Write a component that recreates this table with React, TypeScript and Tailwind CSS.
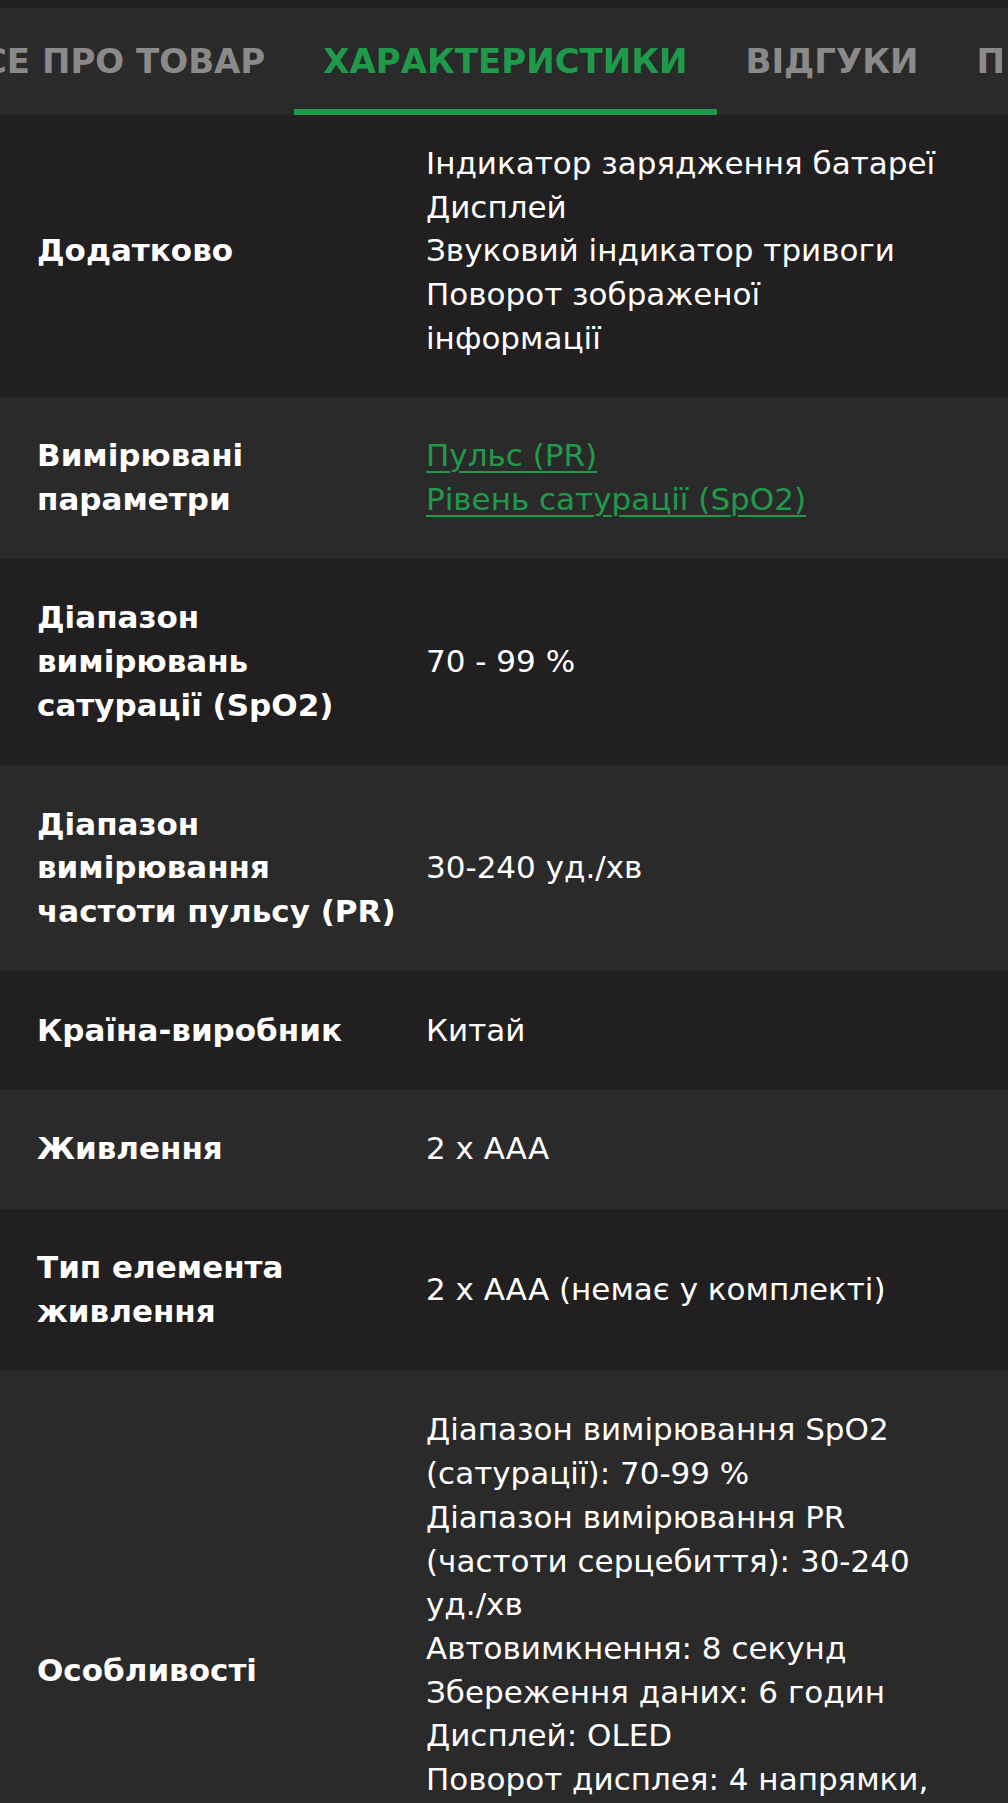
import React, { useLayoutEffect, useRef } from "react";

type Row = {
  label: string[];
  value: string[];
  link?: boolean;
  first?: boolean;
};

const rows: Row[] = [
  {
    label: ["Додатково"],
    value: [
      "Індикатор зарядження батареї",
      "Дисплей",
      "Звуковий індикатор тривоги",
      "Поворот зображеної",
      "інформації",
    ],
    first: true,
  },
  {
    label: ["Вимірювані", "параметри"],
    value: ["Пульс (PR)", "Рівень сатурації (SpO2)"],
    link: true,
  },
  {
    label: ["Діапазон", "вимірювань", "сатурації (SpO2)"],
    value: ["70 - 99 %"],
  },
  {
    label: ["Діапазон", "вимірювання", "частоти пульсу (PR)"],
    value: ["30-240 уд./хв"],
  },
  { label: ["Країна-виробник"], value: ["Китай"] },
  { label: ["Живлення"], value: ["2 x AAA"] },
  { label: ["Тип елемента", "живлення"], value: ["2 x AAA (немає у комплекті)"] },
  {
    label: ["Особливості"],
    value: [
      "Діапазон вимірювання SpO2",
      "(сатурації): 70-99 %",
      "Діапазон вимірювання PR",
      "(частоти серцебиття): 30-240",
      "уд./хв",
      "Автовимкнення: 8 секунд",
      "Збереження даних: 6 годин",
      "Дисплей: OLED",
      "Поворот дисплея: 4 напрямки,",
      "6 режимів відображення",
      "Індикатор низького заряду",
      "батареї",
    ],
  },
];

const tabs = ["Все про товар", "Характеристики", "Відгуки", "Питання"];

function Tabs() {
  const scroller = useRef<HTMLDivElement>(null);
  const active = useRef<HTMLButtonElement>(null);
  useLayoutEffect(() => {
    if (scroller.current && active.current) {
      scroller.current.scrollLeft = active.current.offsetLeft - 294;
    }
  }, []);
  return (
    <div className="bg-[#1f1e1e] pt-[8px]">
      <div
        ref={scroller}
        className="bg-[#2b2a2a] h-[107px] overflow-x-auto overflow-y-hidden [scrollbar-width:none]"
      >
        <div className="relative flex h-full w-max">
          {tabs.map((t, i) => {
            const isActive = i === 1;
            return (
              <button
                key={t}
                ref={isActive ? active : undefined}
                className={
                  "relative flex h-full items-center whitespace-nowrap px-[29px] pb-[1px] text-[34px] font-bold uppercase leading-none " +
                  (isActive ? "text-[#1f9a4a]" : "text-[#8a8a8a]")
                }
              >
                {t}
                {isActive && (
                  <span className="absolute bottom-0 left-0 right-0 h-[6px] bg-[#1f9a4a]" />
                )}
              </button>
            );
          })}
        </div>
      </div>
    </div>
  );
}

export default function App() {
  return (
    <div
      className="min-h-[1803px] bg-[#211f1f] text-white"
      style={{ fontFamily: '"DejaVu Sans", sans-serif' }}
    >
      <Tabs />
      <div>
        {rows.map((r, i) => (
          <div
            key={i}
            className={
              "grid grid-cols-[370px_530px] items-center gap-x-[19px] px-[37px] " +
              (i % 2 === 0 ? "bg-[#211f1f] " : "bg-[#2b2a2a] ") +
              (r.first ? "pt-[27px] pb-[36px]" : "py-[37.5px]")
            }
          >
            <div className="text-[31px] font-bold leading-[43.7px]">
              {r.label.map((l, j) => (
                <span key={j} className="block whitespace-nowrap">
                  {l}
                </span>
              ))}
            </div>
            <div className="text-[31px] leading-[43.7px]">
              {r.value.map((v, j) =>
                r.link ? (
                  <a
                    key={j}
                    href="#"
                    className="block w-max whitespace-nowrap text-[#1f9a4a] underline decoration-[2px] underline-offset-[5px]"
                  >
                    {v}
                  </a>
                ) : (
                  <span key={j} className="block whitespace-nowrap">
                    {v}
                  </span>
                )
              )}
            </div>
          </div>
        ))}
      </div>
    </div>
  );
}
